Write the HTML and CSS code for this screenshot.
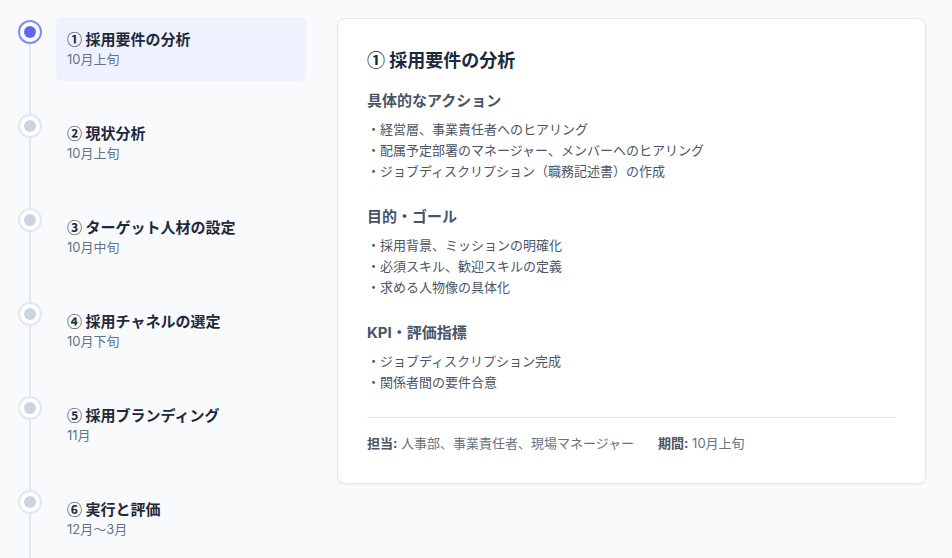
FILE: index.html
```html
<!DOCTYPE html>
<html lang="ja">
<head>
    <meta charset="UTF-8">
    <meta name="viewport" content="width=device-width, initial-scale=1.0">
    <title>採用計画タイムライン</title>
    <link rel="stylesheet" href="styles.css">
</head>
<body>
    <div class="page">
        <ul class="timeline">
            <li class="step active">
                <span class="marker"></span>
                <div class="step-box">
                    <div class="step-title"><span class="num">①</span> 採用要件の分析</div>
                    <div class="step-date">10月上旬</div>
                </div>
            </li>
            <li class="step">
                <span class="marker"></span>
                <div class="step-box">
                    <div class="step-title"><span class="num">②</span> 現状分析</div>
                    <div class="step-date">10月上旬</div>
                </div>
            </li>
            <li class="step">
                <span class="marker"></span>
                <div class="step-box">
                    <div class="step-title"><span class="num">③</span> ターゲット人材の設定</div>
                    <div class="step-date">10月中旬</div>
                </div>
            </li>
            <li class="step">
                <span class="marker"></span>
                <div class="step-box">
                    <div class="step-title"><span class="num">④</span> 採用チャネルの選定</div>
                    <div class="step-date">10月下旬</div>
                </div>
            </li>
            <li class="step">
                <span class="marker"></span>
                <div class="step-box">
                    <div class="step-title"><span class="num">⑤</span> 採用ブランディング</div>
                    <div class="step-date">11月</div>
                </div>
            </li>
            <li class="step">
                <span class="marker"></span>
                <div class="step-box">
                    <div class="step-title"><span class="num">⑥</span> 実行と評価</div>
                    <div class="step-date">12月～3月</div>
                </div>
            </li>
        </ul>

        <div class="detail-card">
            <h2 class="detail-title"><span class="num">①</span> 採用要件の分析</h2>

            <h3 class="section-title">具体的なアクション</h3>
            <ul class="section-list">
                <li>・経営層、事業責任者へのヒアリング</li>
                <li>・配属予定部署のマネージャー、メンバーへのヒアリング</li>
                <li>・ジョブディスクリプション（職務記述書）の作成</li>
            </ul>

            <h3 class="section-title">目的・ゴール</h3>
            <ul class="section-list">
                <li>・採用背景、ミッションの明確化</li>
                <li>・必須スキル、歓迎スキルの定義</li>
                <li>・求める人物像の具体化</li>
            </ul>

            <h3 class="section-title">KPI・評価指標</h3>
            <ul class="section-list">
                <li>・ジョブディスクリプション完成</li>
                <li>・関係者間の要件合意</li>
            </ul>

            <div class="detail-footer">
                <span><b>担当:</b> 人事部、事業責任者、現場マネージャー</span>
                <span><b>期間:</b> 10月上旬</span>
            </div>
        </div>
    </div>
</body>
</html>
```

FILE: styles.css
```css
html, body {
    margin: 0;
    height: 100%;
    overflow: hidden;
}

body {
    font-family: Inter, "Noto Sans CJK JP", sans-serif;
    background-color: #f8fafc;
    color: #1e293b;
}

/* circled digits come out of the CJK font */
.num {
    font-family: "Noto Sans CJK JP", sans-serif;
    line-height: 1;
}

.page {
    display: flex;
    align-items: flex-start;
    gap: 31px;
    padding: 17px 26px 0 18px;
}

/* left timeline */
.timeline {
    position: relative;
    list-style: none;
    margin: 0;
    padding: 0;
    width: 288px;
    flex-shrink: 0;
    display: flex;
    flex-direction: column;
    gap: 30px;
}

.timeline::before {
    content: "";
    position: absolute;
    left: 11px;
    top: 20px;
    bottom: -7px;
    width: 2px;
    background-color: #e2e8f0;
}

.step {
    display: flex;
    align-items: flex-start;
    gap: 14px;
}

.marker {
    position: relative;
    z-index: 1;
    flex-shrink: 0;
    width: 20px;
    height: 20px;
    margin-top: 3px;
    border: 2px solid #e2e8f0;
    border-radius: 50%;
    background-color: #fff;
    display: flex;
    justify-content: center;
    align-items: center;
}

.marker::after {
    content: "";
    width: 12px;
    height: 12px;
    border-radius: 50%;
    background-color: #cbd5e1;
}

.step.active .marker {
    border-color: #818cf8;
}

.step.active .marker::after {
    background-color: #6366f1;
}

.step-box {
    flex: 1;
    height: 64px;
    box-sizing: border-box;
    padding: 12px 11px;
    border-radius: 6px;
}

.step.active .step-box {
    background-color: #eef2ff;
}

.step-title {
    font-size: 15px;
    font-weight: 700;
    line-height: 21px;
    color: #1e293b;
}

.step-date {
    font-size: 13px;
    line-height: 19px;
    color: #64748b;
}

/* right detail card */
.detail-card {
    flex: 1;
    margin-top: 1px;
    background-color: #fff;
    border: 1px solid #e5e7eb;
    border-radius: 8px;
    box-shadow: 0 1px 3px rgba(0, 0, 0, 0.05);
    padding: 29px 30px 30px 29px;
}

.detail-title {
    margin: 0 0 16px;
    font-size: 18px;
    font-weight: 700;
    line-height: 26px;
    color: #1e293b;
}

.section-title {
    margin: 0 0 8px;
    font-size: 15px;
    font-weight: 700;
    line-height: 21px;
    color: #475569;
}

.section-list {
    list-style: none;
    margin: 0 0 24px;
    padding: 0;
    font-size: 13px;
    line-height: 21px;
    color: #4b5563;
}

.detail-footer {
    border-top: 1px solid #e5e7eb;
    padding-top: 15px;
    display: flex;
    gap: 24px;
    font-size: 13px;
    line-height: 20px;
    color: #6b7280;
}

.detail-footer b {
    color: #4b5563;
}
```
